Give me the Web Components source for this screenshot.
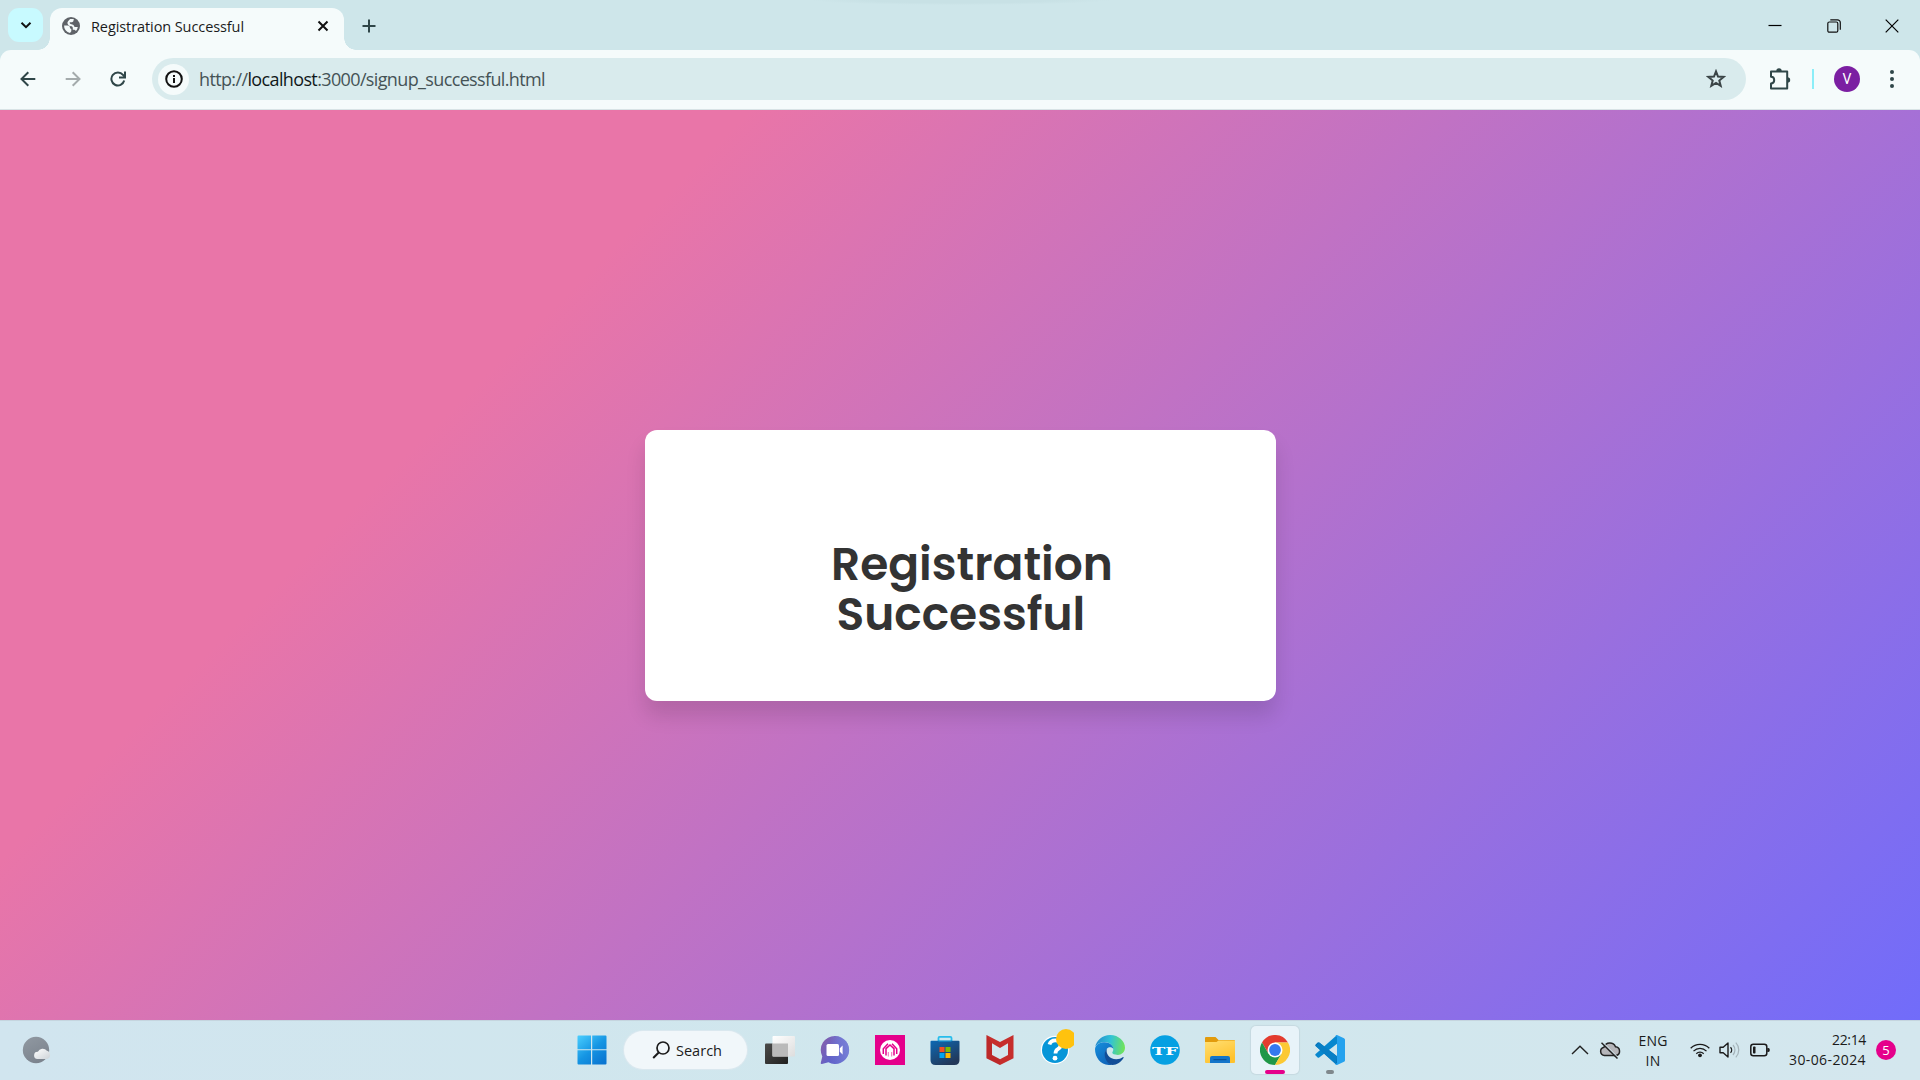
<!DOCTYPE html>
<html lang="en">
<head>
<meta charset="utf-8">
<title>Registration Successful</title>
<style>
html,body{margin:0;height:100%;overflow:hidden}
body{font-family:"Segoe UI","Open Sans","Noto Sans",sans-serif;color:#1b1b1b}
</style>
</head>
<body>
<desktop-screen></desktop-screen>
<script>
const define=(name,html,after)=>customElements.define(name,class extends HTMLElement{
  constructor(){super();this.attachShadow({mode:'open'}).innerHTML=html;}
  connectedCallback(){if(after)after.call(this);}
});

// Single line of text whose letter spacing is tuned to reach a given width
define('fit-text','<style>:host{display:inline-block;white-space:nowrap;line-height:1}span{display:inline-block}</style><span><slot></slot></span>',function(){
  requestAnimationFrame(()=>{
    const s=this.shadowRoot.querySelector('span'),w=+this.getAttribute('width');
    const n=this.textContent.length;
    s.style.letterSpacing=((w-s.getBoundingClientRect().width)/n)+'px';
  });
});

const icons={
chevron:['12 12','<path d="M1.5 3.8 6 8.2l4.5-4.4" fill="none" stroke="#111" stroke-width="2"/>'],
globe:['18 18','<circle cx="9" cy="9" r="9" fill="#5f6368"/><path d="M2.1 8.4h3.2c1.9 0 2.6.9 2.6 2.2 0 .9.7 1.2 1.4 1.4v2.2l-1.3 1.7A7.1 7.1 0 0 1 2.1 8.4zM8.2 2l3.6.1-.4 2c-.2.8-.7 1.1-1.5 1.1H8.3c-.5 0-.8.5-.6.9.5 1.2 1.3 1.3 2.6 1.3 1 0 1.5.8 1.7 1.7.2 1 1 1 2.3 1h1.5c-.4 2-1 3-1.9 4-.5-.9-1.2-1.3-2.3-1.3h-.8V11c0-1.1-.7-1.7-1.7-1.7C7.3 9.300 6 8 5.500 6.500 5 5 6.700 3.200 8.200 2z" fill="#f5fbfb"/>'],
x:['12 12','<path d="M1.5 1.500 10.500 10.500M10.500 1.500 1.500 10.500" stroke="#111" stroke-width="2"/>'],
plus:['14 14','<path d="M7 .5v13M.5 7h13" stroke="#2f4648" stroke-width="2"/>'],
min:['14 14','<path d="M.5 6.500h13" stroke="#000" stroke-width="1.200"/>'],
restore:['14 14','<rect x=".8" y="3" width="10" height="10.200" rx="1.500" fill="none" stroke="#111" stroke-width="1.200"/><path d="M3.300.8h7.200a2.800 2.800 0 0 1 2.800 2.800v7.200" fill="none" stroke="#111" stroke-width="1.200"/>'],
close:['14 14','<path d="M.7.700 13.300 13.300M13.300.700.700 13.300" stroke="#000" stroke-width="1.200"/>'],
back:['16 16','<path d="M15.300 8H2M8.300 1.200 1.500 8l6.800 6.800" fill="none" stroke="#2f4648" stroke-width="2"/>'],
fwd:['16 16','<path d="M.700 8H14M7.700 1.200 14.500 8l-6.800 6.800" fill="none" stroke="#a4abac" stroke-width="2"/>'],
reload:['16 16','<path d="M14.200 9.500A6.500 6.500 0 1 1 13 3.900L14.600 6" fill="none" stroke="#2f4648" stroke-width="2"/><path d="M15 .5v6H9" fill="none" stroke="#2f4648" stroke-width="2"/>'],
info:['18 18','<circle cx="9" cy="9" r="7.800" fill="none" stroke="#111" stroke-width="2"/><path d="M9 8v5M9 4.900v2" stroke="#111" stroke-width="2"/>'],
star:['20 20','<path d="M10 2.400 12 7.500l5.600.400-4.300 3.600 1.400 5.400-4.700-3-4.700 3 1.400-5.400L2.400 7.900 8 7.500z" fill="none" stroke="#3b4547" stroke-width="2"/>'],
puzzle:['22 22','<path d="M2 3.500h16.200v17H2v-5c2 0 3.200-1.500 3.200-3.400S4 8.700 2 8.700z" fill="none" stroke="#2f4648" stroke-width="2" stroke-linejoin="round"/><path d="M7.300 3a2.700 2.700 0 0 1 5.400 0zM18.500 9.200a2.700 2.700 0 0 1 0 5.400z" fill="#2f4648"/>'],
dots:['6 18','<g fill="#2f4648"><circle cx="3" cy="2" r="2"/><circle cx="3" cy="9" r="2"/><circle cx="3" cy="16" r="2"/></g>'],
weather:['30 28','<defs><linearGradient id="a" x2=".5" y2="1"><stop stop-color="#9199a2"/><stop offset="1" stop-color="#7c848e"/></linearGradient><linearGradient id="b" y2="1"><stop stop-color="#fff"/><stop offset="1" stop-color="#cdd3d8"/></linearGradient></defs><circle cx="14" cy="14" r="13.200" fill="url(#a)"/><path d="M15.500 23a3.600 3.600 0 0 1 .4-7.200 5.200 5.200 0 0 1 9-1 4.300 4.300 0 0 1 .4 8.200z" fill="url(#b)"/>'],
start:['30 30','<defs><linearGradient id="a" gradientUnits="userSpaceOnUse" x1="0" y1="0" x2="24" y2="30"><stop stop-color="#4cd0ff"/><stop offset=".55" stop-color="#1595e3"/><stop offset="1" stop-color="#0a75d1"/></linearGradient></defs><path d="M1.500.500H14v13.700H.500V1.500a1 1 0 0 1 1-1zM15.200.500h13.300a1 1 0 0 1 1 1v12.700H15.200zM.500 15.300H14v14.200H1.500a1 1 0 0 1-1-1zM15.200 15.300h14.300v13.200a1 1 0 0 1-1 1H15.200z" fill="url(#a)"/>'],
search:['18 18','<circle cx="11" cy="7" r="6" fill="none" stroke="#1b1b1b" stroke-width="1.700"/><path d="M6.700 11.500 1.200 17" stroke="#1b1b1b" stroke-width="2"/>'],
task:['30 30','<defs><linearGradient id="a" y2="1"><stop stop-color="#4b4b4a"/><stop offset="1" stop-color="#20201f"/></linearGradient><linearGradient id="b" x2="1" y2="1"><stop stop-color="#fff"/><stop offset="1" stop-color="#ddd"/></linearGradient></defs><rect x="0" y="8.500" width="23" height="20.500" rx="1" fill="url(#a)"/><rect x="7.500" y="1" width="22.500" height="20.500" rx="1" fill="url(#b)"/><rect x="7.500" y="8.500" width="15.500" height="13" fill="#bababa"/>'],
chat:['30 30','<defs><linearGradient id="a" x1="0" y1=".2" x2="1" y2=".7"><stop stop-color="#875fab"/><stop offset=".5" stop-color="#6262c8"/><stop offset="1" stop-color="#4f55c4"/></linearGradient><linearGradient id="b" x2="1" y2="0"><stop offset=".3" stop-color="#a8b5f0" stop-opacity="0"/><stop offset="1" stop-color="#a4b3ed" stop-opacity=".45"/></linearGradient></defs><path d="M15 1a14 14 0 1 1-6.600 26.300L2 29c-1 .2-1.500-.4-1.200-1.200l1.500-6.400A14 14 0 0 1 15 1z" fill="url(#a)"/><path d="M15 1a14 14 0 1 1-6.600 26.300L2 29l.3-7.600A14 14 0 0 1 15 1z" fill="url(#b)"/><rect x="6.500" y="9" width="12.500" height="12" rx="1.500" fill="#fff"/><path d="M19.800 13.300 22.600 10.500v9l-2.800-2.800z" fill="#fff"/>'],
pink:['30 30','<path fill="#e5008b" d="M0 0h30v30H0z"/><circle cx="15" cy="15" r="10" fill="#fff"/><path d="M8.300 19v-5.200L13 8.800M21.700 19v-5.200L17 8.800M11 20.500v-6.800L15 10l4 3.700v6.800" fill="none" stroke="#e5008b" stroke-width="1.500"/><path d="M13.300 17v4.500M16.700 17v4.500" stroke="#e5008b" stroke-width=".6"/>'],
store:['30 30','<defs><linearGradient id="a" x2=".6" y2="1"><stop stop-color="#0d69b4"/><stop offset="1" stop-color="#223859"/></linearGradient></defs><path d="M8.500 7V3q0-1.200 1.200-1.200h10.600q1.200 0 1.200 1.200v4" fill="none" stroke="#27bdec" stroke-width="1.800"/><path d="M1.500 5.700h27q1 0 1 1V25q0 5-5 5h-19q-5 0-5-5V6.700q0-1 1-1z" fill="url(#a)"/><path d="M8.500 6h13" stroke="#18a1dc" stroke-width="1"/><path fill="#f25022" d="M9.500 12h5v5h-5z"/><path fill="#7fba00" d="M15.500 12h5v5h-5z"/><path fill="#00a4ef" d="M9.500 18h5v5h-5z"/><path fill="#ffb900" d="M15.500 18h5v5h-5z"/>'],
mcafee:['28 30','<path d="M.5 0 14 7 27.500 0v23.300L14 30 .5 23.300z" fill="#c62e2c"/><path d="M6 8.300 14 13l8-4.700v11.600l-8 4.300-8-4.300z" fill="#d3e7ee"/><path d="M.5 0 6 8.300v11.600L14 24.200V30L.5 23.300z" fill="#a81e24" opacity=".3"/>'],
help:['34 36','<circle cx="15" cy="21" r="14.200" fill="#fff"/><circle cx="15" cy="21" r="13" fill="#0796d8"/><path d="M9.500 15.500q1-4.200 5.800-4.200 5.400 0 5.400 4.500 0 2.700-2.800 4.300-2.400 1.400-2.400 4.400" fill="none" stroke="#fff" stroke-width="3.800"/><circle cx="15" cy="29.200" r="2.400" fill="#fff"/><circle cx="26" cy="10" r="10" fill="#ffc20e"/>'],
edge:['30 30','<defs><linearGradient id="a" x1="0" y1=".4" x2="1" y2=".5"><stop stop-color="#2489ce"/><stop offset=".5" stop-color="#31c3d6"/><stop offset="1" stop-color="#72e456"/></linearGradient><linearGradient id="b" x2=".7" y2="1"><stop stop-color="#1690dd"/><stop offset="1" stop-color="#0f62b8"/></linearGradient></defs><path d="M.2 12C1.500 5 7.500 0 15 0c9 0 15 6.500 15 12.700 0 4.500-3.700 7.200-7.200 7.200-3.500 0-5.500-1-5.500-2.300 0-.8 1-1.200 1-3C18.300 10 14 7 9.800 7 5 7 1.500 9.500.2 12z" fill="url(#a)"/><path d="M0 14C.5 10 4.500 7.300 9.800 7.300c4.700 0 8.200 3 8.500 6.500-1-2-5.300-2.500-6.900.5C8.500 20 13 29 17.500 29.800 7 31.500 0 23.500 0 14z" fill="url(#b)"/><path d="M12 13.500c-1.800 5 2.500 10.700 9.200 10.700 3 0 5-1 6.500-2 .6-.4 1.200.2.800.8C26 27 22 30 17.500 30 12 29.500 6.500 19.500 12 13.500z" fill="#114d97"/>'],
tf:['30 30','<circle cx="15" cy="15" r="14.800" fill="#06a0e2"/><text x="15" y="19.600" text-anchor="middle" textLength="26" lengthAdjust="spacingAndGlyphs" font-family="DejaVu Serif,serif" font-weight="bold" font-size="11.500" fill="#fff">TF</text>'],
folder:['30 30','<defs><linearGradient id="a" x2=".5" y2="1"><stop stop-color="#ffdf73"/><stop offset="1" stop-color="#ffc22d"/></linearGradient></defs><path d="M0 3q0-1 1-1h9.500l3 3H29q1 0 1 1v8H0z" fill="#e29b0c"/><path d="M0 7h11.500l2-1.500H30V27q0 1-1 1H1q-1 0-1-1z" fill="url(#a)"/><path d="M5 28v-5q0-2 2-2h16q2 0 2 2v5z" fill="#1475ca"/><path d="M8.500 24.700h13" stroke="#084b8f" stroke-width="1"/>'],
chrome:['30 30','<path d="M15 7.500h13A15 15 0 0 0 2 7.500l6.500 11.300z" fill="#e33b2e"/><path d="M2 7.500l6.500 11.300h13L15 30A15 15 0 0 1 2 7.500z" fill="#209747"/><path d="M15 7.500h13A15 15 0 0 1 15 30l6.500-11.200z" fill="#fcc934"/><circle cx="15" cy="15" r="7.500" fill="#fff"/><circle cx="15" cy="15" r="5.900" fill="#3479ef"/>'],
code:['30 30','<path d="M22 30 22 21.300 4.200 7.500Q3.400 7 2.600 7.600L.6 9.400Q-.2 10.200.6 11z" fill="#0070b8"/><path d="M22 0v8.700L4.200 22.500Q3.400 23 2.600 22.400L.6 20.600Q-.2 19.800.6 19z" fill="#0787ce"/><path d="m.6 11 20.400 18.500 1-8.200L4.200 7.500z" fill="#087fc5"/><path d="M22 0 29 3.200Q30 3.700 30 4.800V25.200q0 1.100-1 1.600L22 30q-1.300.3-1.500-.7L22 28V2L20.500.8Q21 0 22 0z" fill="#25a2ee"/>'],
up:['18 10','<path d="M1 9 9 1.200 17 9" fill="none" stroke="#222" stroke-width="1.400"/>'],
cloud:['22 18','<path d="M5.500 14.500A4.200 4.200 0 0 1 5 6.200a6.200 6.200 0 0 1 11.500-.4 4.400 4.400 0 0 1 .5 8.700z" fill="#b5b5b9" stroke="#222" stroke-width="1.500"/><path d="M3.500 1.200 19.500 17.200" stroke="#d3e7ee" stroke-width="1.200"/><path d="M2.500 1.800 18.500 17.500" stroke="#222" stroke-width="1.500"/>'],
wifi:['20 16','<g fill="none" stroke="#1b1b1b" stroke-width="1.300"><path d="M.7 6.300a13.200 13.200 0 0 1 18.600 0M3.500 9.100a9.200 9.200 0 0 1 13 0M6.300 11.700a5.300 5.300 0 0 1 7.400 0"/></g><circle cx="10" cy="13.300" r="1.900" fill="#1b1b1b"/>'],
vol:['22 18','<path d="M1 6.200h3.200L9 2v14l-4.800-4.200H1z" fill="none" stroke="#1b1b1b" stroke-width="1.400" stroke-linejoin="round"/><path d="M11.500 6.200a4 4 0 0 1 0 5.600" fill="none" stroke="#1b1b1b" stroke-width="1.300"/><path d="M14 4a7.500 7.500 0 0 1 0 10M16.800 1.700a10.500 10.500 0 0 1 0 14.600" fill="none" stroke="#a5b4ba" stroke-width="1.200"/>'],
battery:['20 14','<rect x=".8" y="1.200" width="16" height="11.600" rx="2.500" fill="none" stroke="#1b1b1b" stroke-width="1.500"/><rect x="3" y="3.500" width="2.500" height="7" rx=".8" fill="#1b1b1b"/><path d="M17.300 5h1q1.500 0 1.500 2t-1.500 2h-1z" fill="#1b1b1b"/>']
};
customElements.define('ui-icon',class extends HTMLElement{
  constructor(){super();this.attachShadow({mode:'open'});}
  connectedCallback(){
    const [size,art]=icons[this.getAttribute('name')],[w,h]=size.split(' ');
    this.shadowRoot.innerHTML=`<style>:host{display:block;flex:none;width:${w}px;height:${h}px}svg{display:block}</style><svg width="${w}" height="${h}" viewBox="0 0 ${size}">${art}</svg>`;
  }
});

define('tab-strip',`<style>
:host{display:flex;height:50px;box-sizing:border-box;background:radial-gradient(150px 5px at 960px 0,#c8e1e5 60%,transparent) no-repeat,#cee6ea;padding-left:8px}
.list{width:35px;height:34px;margin-top:8px;border-radius:11px;background:#c8faff;display:grid;place-items:center}
.tab{position:relative;width:294px;height:42px;margin:8px 0 0 7px;box-sizing:border-box;border-radius:12px 12px 0 0;background:#f5fbfb;display:flex;align-items:center;padding:0 15px 7px 12px;font-size:14.500px}
.tab::before,.tab::after{content:"";position:absolute;bottom:0;width:12px;height:12px}
.tab::before{left:-12px;background:radial-gradient(circle at 0 0,transparent 11.500px,#f5fbfb 12px)}
.tab::after{right:-12px;background:radial-gradient(circle at 100% 0,transparent 11.500px,#f5fbfb 12px)}
fit-text{margin:3px auto 0 11px}
.new{margin:19px auto 0 17.500px}
.win{display:flex;align-items:center;height:51px;gap:44.500px;padding-right:21.500px}
.win>:nth-child(2){margin-right:-.5px}
</style><div class="list"><ui-icon name="chevron"></ui-icon></div>
<div class="tab"><ui-icon name="globe"></ui-icon><fit-text width="153">Registration Successful</fit-text><ui-icon name="x"></ui-icon></div>
<ui-icon class="new" name="plus"></ui-icon>
<div class="win"><ui-icon name="min"></ui-icon><ui-icon name="restore"></ui-icon><ui-icon name="close"></ui-icon></div>`);

define('address-bar',`<style>
:host{display:block;height:60px;background:#cee6ea}
.bar{display:flex;align-items:center;height:60px;box-sizing:border-box;padding:0 25px 1px 20px;background:#f5fbfb;border-bottom:1px solid #d8e3e5;border-radius:11px 11px 0 0}
.nav{display:flex;gap:29px;width:132px}
.pill{display:flex;align-items:center;box-sizing:border-box;width:1594px;height:42px;border-radius:21px;background:#d9ebed;padding:0 20px 0 6px;font-size:18px;color:#455356}
.site{width:31px;height:31px;border-radius:50%;background:#f5fbfb;display:grid;place-items:center;margin-right:10px}
fit-text{margin-right:auto}b{font-weight:400;color:#101819}
.tools{display:flex;align-items:center;flex:1}
.line{width:2px;height:20px;background:#8ceef8;margin:0 20px 0 21px}
.me{width:26px;height:26px;border-radius:50%;background:#7b1fa2;color:#fff;display:grid;place-items:center;font:14px/1 Roboto,sans-serif;margin-right:29px}
</style><div class="bar"><div class="nav"><ui-icon name="back"></ui-icon><ui-icon name="fwd"></ui-icon><ui-icon name="reload"></ui-icon></div>
<div class="pill"><div class="site"><ui-icon name="info"></ui-icon></div><fit-text width="346">http://<b>localhost</b>:3000/signup_successful.html</fit-text><ui-icon name="star"></ui-icon></div>
<div class="tools"><ui-icon name="puzzle" style="margin-left:23px"></ui-icon><i class="line"></i><div class="me">V</div><ui-icon name="dots"></ui-icon></div></div>`);

define('success-page',`<style>
:host{display:flex;flex:1;justify-content:center;align-items:flex-start;padding-top:320px;box-sizing:border-box;background:linear-gradient(135deg,#e975a8 26.500%,#716cfa)}
.card{width:631px;height:271px;box-sizing:border-box;border-radius:12px;background:#fff;box-shadow:0 15px 20px rgba(0,0,0,.12);padding:109px 0 0 192px}
h1{margin:0;width:300px;font:600 45.500px/50px Poppins,Inter,sans-serif;color:#333;text-indent:-5.500px}
</style><div class="card"><h1>Registration Successful</h1></div>`);

define('task-item',`<style>
:host{display:grid;place-items:center;position:relative;flex:none;width:55px;height:60px}
.tile{width:48px;height:48px;border-radius:5px;display:grid;place-items:center}
:host([active]) .tile{background:#e8f3f9;box-shadow:0 0 1px 1px #c6d9e0}
:host([active])::after,:host([open])::after{content:"";position:absolute;bottom:6px;left:50%;transform:translateX(-50%);height:4px;border-radius:2px;width:20px;background:#e5008b}
:host([open])::after{width:8px;background:#7f888c}
</style><div class="tile"><slot></slot></div>`);

define('system-tray',`<style>
:host{display:flex;align-items:center;height:60px;font-size:14px;line-height:20px;padding-right:24px}
.lang{display:flex;flex-direction:column;align-items:center;width:30px;margin:1px 22px 0 16px}
.time{display:flex;flex-direction:column;align-items:flex-end;margin:0 10px 0 19px}
.time fit-text,.lang fit-text{line-height:20px}
.n{width:20px;height:20px;border-radius:50%;background:#e5008b;color:#fff;display:grid;place-items:center;font-size:13px;line-height:20px}
</style><ui-icon name="up"></ui-icon><ui-icon name="cloud" style="margin:0 1px 0 10px"></ui-icon>
<div class="lang"><fit-text width="29">ENG</fit-text><fit-text width="15">IN</fit-text></div>
<ui-icon name="wifi"></ui-icon><ui-icon name="vol" style="margin-left:9px"></ui-icon><ui-icon name="battery" style="margin-left:9px"></ui-icon>
<div class="time"><fit-text width="34">22:14</fit-text><fit-text width="77">30-06-2024</fit-text></div><div class="n">5</div>`);

define('task-bar',`<style>
:host{display:flex;align-items:center;height:60px;background:linear-gradient(90deg,#d1e5ef,#d0e7ed 50%,#d4e7ee);box-shadow:inset 0 1px #c5d5df}
.weather{margin:0 512px 0 22px}
.search{display:flex;align-items:center;box-sizing:border-box;width:123px;height:38px;border-radius:19px;background:#f1f7fa;box-shadow:0 0 0 1px #dae8ef;margin:0 5px;padding-left:28px;gap:6px;font-size:14.500px}
.search fit-text{margin-top:2px}
system-tray{margin-left:auto}
</style><ui-icon class="weather" name="weather"></ui-icon>
<task-item><ui-icon name="start"></ui-icon></task-item>
<div class="search"><ui-icon name="search"></ui-icon><fit-text width="46">Search</fit-text></div>
<task-item><ui-icon name="task"></ui-icon></task-item><task-item><ui-icon name="chat"></ui-icon></task-item><task-item><ui-icon name="pink"></ui-icon></task-item><task-item><ui-icon name="store"></ui-icon></task-item><task-item><ui-icon name="mcafee"></ui-icon></task-item><task-item><ui-icon name="help" style="margin:-6px 0 0 4px"></ui-icon></task-item><task-item><ui-icon name="edge"></ui-icon></task-item><task-item><ui-icon name="tf"></ui-icon></task-item><task-item><ui-icon name="folder"></ui-icon></task-item><task-item active><ui-icon name="chrome"></ui-icon></task-item><task-item open><ui-icon name="code"></ui-icon></task-item>
<system-tray></system-tray>`);

define('desktop-screen',`<style>:host{display:flex;flex-direction:column;width:1920px;height:1080px}</style><tab-strip></tab-strip><address-bar></address-bar><success-page></success-page><task-bar></task-bar>`);
</script>
</body>
</html>
